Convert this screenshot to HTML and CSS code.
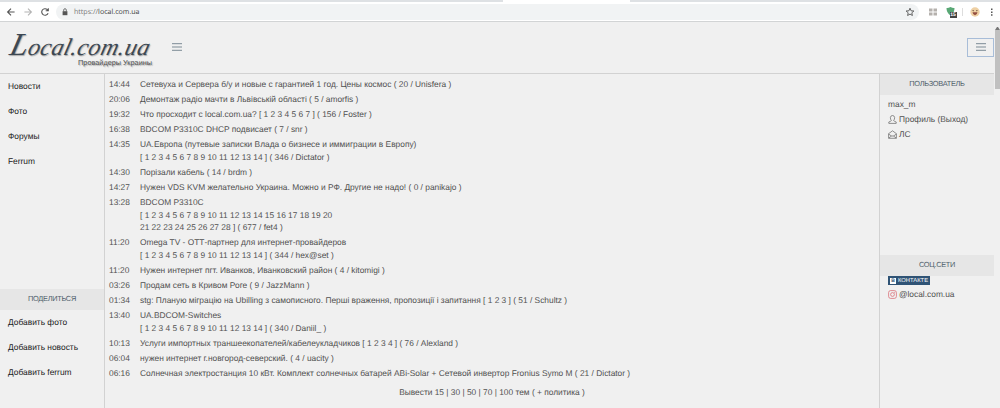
FILE: index.html
```html
<!DOCTYPE html>
<html lang="ru">

<head>
    <meta charset="UTF-8" />
    <title>Local.com.ua</title>
    <link rel="stylesheet" href="styles.css">
</head>

<body>
    <!-- Browser bar -->
    <div class="tabs"><span class="active-tab"></span></div>
    <div class="toolbar">
        <svg class="nav-icon" viewBox="0 0 10 10"><path d="M8.6 5H1.6M5 1.6L1.6 5L5 8.4" /></svg>
        <svg class="nav-icon muted" viewBox="0 0 10 10"><path d="M1.4 5H8.4M5 1.6L8.4 5L5 8.4" /></svg>
        <svg class="nav-icon" viewBox="0 0 10 10"><path d="M8.1 6.2A3.3 3.3 0 1 1 7.3 2.6L8.2 3.6M8.3 1.2V3.8H5.7" /></svg>
        <div class="address">
            <svg class="lock" viewBox="0 0 6 8"><path d="M1 3.2h4.4v4H.6v-4z" fill="#555" /><path d="M1.7 3.4V2a1.3 1.3 0 0 1 2.6 0v1.4" fill="none" stroke="#555" stroke-width=".8" /></svg>
            <span class="url"><span class="scheme">https://</span>local.com.ua</span>
            <svg class="star" viewBox="0 0 10 10"><path d="M5 1.2L6.1 3.8L8.9 4L6.8 5.8L7.4 8.5L5 7.1L2.6 8.5L3.2 5.8L1.1 4L3.9 3.8Z" fill="none" stroke="#555" stroke-width=".9" /></svg>
        </div>
        <div class="extensions">
            <svg class="grid-icon" viewBox="0 0 8 8"><path d="M0 .5h3.5v3H0zM4.5 .5H8v3H4.5zM0 4.5h3.5v3H0zM4.5 4.5H8v3H4.5z" fill="#b5b1ad" /></svg>
            <div class="shield">
                <svg viewBox="0 0 9 9"><path d="M.5 1Q2.5 1.2 4.5 0Q6.5 1.2 8.5 1Q8.6 6 4.5 8.5Q.4 6 .5 1Z" fill="#59a875" /></svg>
                <span class="badge">15</span>
            </div>
            <span class="divider"></span>
            <svg class="avatar" viewBox="0 0 10 10"><circle cx="5" cy="5" r="4.7" fill="#eed0a4" /><path d="M2.5 3.5l1.5.3M7.5 3.5L6 3.8" stroke="#705342" stroke-width=".9" /><path d="M2.5 5.3h5Q7 8.2 5 8.2T2.5 5.3z" fill="#934e40" /></svg>
            <svg class="dots" viewBox="0 0 2 8"><path d="M0 .5h1.5v1.5H0zM0 3.4h1.5v1.5H0zM0 6.3h1.5v1.5H0z" fill="#555" /></svg>
        </div>
    </div>

    <div class="page">
        <div class="content">
            <header class="header">
                <div class="logo">
                    <div class="logo-name"><span class="logo-cap">L</span>ocal.com.ua</div>
                    <div class="logo-sub">Провайдеры Украины</div>
                </div>
                <div class="menu-button"><svg viewBox="0 0 10 8"><path d="M0 .7h10M0 4h10M0 7.3h10" /></svg></div>
                <div class="menu-button focused"><svg viewBox="0 0 10 8"><path d="M0 .7h10M0 4h10M0 7.3h10" /></svg></div>
            </header>

            <div class="columns">
                <nav class="left">
                    <div class="links main-links">
                        <a>Новости</a>
                        <a>Фото</a>
                        <a>Форумы</a>
                        <a>Ferrum</a>
                    </div>
                    <div class="heading">ПОДЕЛИТЬСЯ</div>
                    <div class="links">
                        <a>Добавить фото</a>
                        <a>Добавить новость</a>
                        <a>Добавить ferrum</a>
                    </div>
                </nav>

                <main class="topics">
                    <div class="topic"><time>14:44</time><p>Сетевуха и Сервера б/у и новые с гарантией 1 год. Цены космос ( 20 / Unisfera )</p></div>
                    <div class="topic"><time>20:06</time><p>Демонтаж радіо мачти в Львівській області ( 5 / amorfis )</p></div>
                    <div class="topic"><time>19:32</time><p>Что просходит с local.com.ua? [ 1 2 3 4 5 6 7 ] ( 156 / Foster )</p></div>
                    <div class="topic"><time>16:38</time><p>BDCOM P3310C DHCP подвисает ( 7 / snr )</p></div>
                    <div class="topic"><time>14:35</time><p>UA.Европа (путевые записки Влада о бизнесе и иммиграции в Европу)<br>[ 1 2 3 4 5 6 7 8 9 10 11 12 13 14 ] ( 346 / Dictator )</p></div>
                    <div class="topic"><time>14:30</time><p>Порізали кабель ( 14 / brdm )</p></div>
                    <div class="topic"><time>14:27</time><p>Нужен VDS KVM желательно Украина. Можно и РФ. Другие не надо! ( 0 / panikajo )</p></div>
                    <div class="topic"><time>13:28</time><p>BDCOM P3310C<br>[ 1 2 3 4 5 6 7 8 9 10 11 12 13 14 15 16 17 18 19 20<br>21 22 23 24 25 26 27 28 ] ( 677 / fet4 )</p></div>
                    <div class="topic"><time>11:20</time><p>Omega TV - ОТТ-партнер для интернет-провайдеров<br>[ 1 2 3 4 5 6 7 8 9 10 11 12 13 14 ] ( 344 / hex@set )</p></div>
                    <div class="topic"><time>11:20</time><p>Нужен интернет пгт. Иванков, Иванковский район ( 4 / kitomigi )</p></div>
                    <div class="topic"><time>03:26</time><p>Продам сеть в Кривом Роге ( 9 / JazzMann )</p></div>
                    <div class="topic"><time>01:34</time><p>stg: Планую міграцію на Ubilling з самописного. Перші враження, пропозиції і запитання [ 1 2 3 ] ( 51 / Schultz )</p></div>
                    <div class="topic"><time>13:40</time><p>UA.BDCOM-Switches<br>[ 1 2 3 4 5 6 7 8 9 10 11 12 13 14 ] ( 340 / Daniil_ )</p></div>
                    <div class="topic"><time>10:13</time><p>Услуги импортных траншеекопателей/кабелеукладчиков [ 1 2 3 4 ] ( 76 / Alexland )</p></div>
                    <div class="topic"><time>06:04</time><p>нужен интернет г.новгород-северский. ( 4 / uacity )</p></div>
                    <div class="topic"><time>06:16</time><p>Солнечная электростанция 10 кВт. Комплект солнечных батарей ABi-Solar + Сетевой инвертор Fronius Symo M ( 21 / Dictator )</p></div>
                    <div class="show-more">Вывести 15 | 30 | 50 | 70 | 100 тем ( + политика )</div>
                </main>

                <aside class="right">
                    <div class="heading">ПОЛЬЗОВАТЕЛЬ</div>
                    <div class="user">
                        <div>max_m</div>
                        <div class="user-row">
                            <svg viewBox="0 0 9 9"><path d="M3.4 5.4Q2.2 4.5 2.4 2.4Q2.7.5 4.5.5T6.6 2.4Q6.8 4.5 5.6 5.4Q5.5 6 8.2 7V8.4H.8V7Q3.5 6 3.4 5.4Z" /></svg>
                            Профиль (Выход)
                        </div>
                        <div class="user-row">
                            <svg viewBox="0 0 9 9"><path d="M.6 3.7L4.5.8L8.4 3.7V8.3H.6zM.6 4L3.4 6H5.6L8.4 4M.8 8.1L3.4 6M8.2 8.1L5.6 6" /></svg>
                            ЛС
                        </div>
                    </div>
                    <div class="heading">СОЦ.СЕТИ</div>
                    <div class="social">
                        <div class="vk"><span class="vk-logo">В</span>КОНТАКТЕ</div>
                        <div class="user-row instagram">
                            <svg viewBox="0 0 9 9"><rect x=".6" y=".6" width="7.8" height="7.8" rx="2" /><circle cx="4.5" cy="4.5" r="1.9" /><circle cx="6.7" cy="2.3" r=".2" /></svg>
                            @local.com.ua
                        </div>
                    </div>
                </aside>
            </div>
        </div>
        <div class="scrollbar"><span class="arrow"></span><span class="thumb"></span></div>
    </div>
</body>

</html>
```
FILE: styles.css
```css
* {
    box-sizing: border-box;
}

body {
    margin: 0;
    width: 1000px;
    height: 408px;
    overflow: hidden;
    display: flex;
    flex-direction: column;
    background-color: #f0f0f0;
    color: #505050;
    font-family: "Liberation Sans", Arial, sans-serif;
    font-size: 8.37px;
    text-rendering: geometricPrecision;
}

svg {
    display: block;
    flex: none;
}

/* Browser bar */
.tabs {
    height: 2px;
    flex: none;
    background-color: #dee1e4;
}

.active-tab {
    display: block;
    width: 127px;
    height: 2px;
    margin-left: 503px;
    background-color: #fff;
}

.toolbar {
    height: 20px;
    flex: none;
    display: flex;
    align-items: center;
    padding: 0 5px 0 6px;
    background-color: #fff;
    border-bottom: 1px solid #d2d4d5;
}

.nav-icon {
    width: 10px;
    height: 10px;
    margin-right: 6.8px;
    fill: none;
    stroke: #555;
    stroke-width: 1.1;
}

.muted {
    stroke: #b4b4b4;
}

.address {
    flex: 1;
    height: 16px;
    display: flex;
    align-items: center;
    padding: 0 4px 0 6px;
    border-radius: 8px;
    background-color: #f1f3f4;
}

.lock {
    width: 6px;
    height: 8px;
}

.url {
    flex: 1;
    margin-left: 5.5px;
    color: #444;
    font-family: "Open Sans", sans-serif;
    font-size: 7.1px;
}

.scheme {
    color: #777;
}

.star {
    width: 10px;
    height: 10px;
}

.extensions {
    width: 76px;
    display: flex;
    align-items: center;
    padding-left: 9.5px;
}

.grid-icon {
    width: 8px;
    height: 8px;
}

.shield {
    position: relative;
    width: 10px;
    margin-left: 9px;
}

.shield svg {
    width: 9px;
    height: 9px;
}

.badge {
    position: absolute;
    left: 4px;
    top: 5px;
    width: 7px;
    height: 6px;
    background-color: #444;
    color: #fff;
    font-size: 5px;
    font-weight: bold;
    line-height: 6px;
    text-align: center;
}

.divider {
    width: 1px;
    height: 8px;
    margin-left: 6px;
    background-color: #ddd;
}

.avatar {
    width: 10px;
    height: 10px;
    margin-left: 7px;
}

.dots {
    width: 2px;
    height: 8px;
    margin-left: 11px;
}

/* Page */
.page {
    flex: 1;
    display: flex;
    min-height: 0;
}

.content {
    width: 994px;
    display: flex;
    flex-direction: column;
}

.header {
    height: 52px;
    flex: none;
    display: flex;
    align-items: center;
    border-bottom: 1px solid #d2d2d2;
}

.logo {
    width: 152px;
    height: 51px;
    padding: 9px 0 0 11px;
    white-space: nowrap;
    text-shadow: 1px 1px 1px #aaa;
}

.logo-name {
    height: 28px;
    line-height: 34px;
    color: #3d4852;
    font-family: "Liberation Serif", serif;
    font-size: 24px;
    font-style: italic;
    letter-spacing: 0.4px;
    transform: skewX(-14deg);
}

.logo-cap {
    font-size: 32px;
    line-height: 20px;
}

.logo-sub {
    line-height: 8px;
    text-align: right;
    font-size: 7.3px;
}

.menu-button {
    width: 27px;
    height: 19px;
    display: flex;
    align-items: center;
    justify-content: center;
    margin-left: 11px;
    margin-bottom: 1px;
}

.menu-button svg {
    width: 10px;
    height: 8px;
    stroke: #7c8b95;
    stroke-width: 1;
}

.focused {
    margin-left: auto;
    border: 1px solid #a8bdd8;
}

.columns {
    flex: 1;
    display: flex;
}

.left {
    width: 105px;
    border-right: 1px solid #d2d2d2;
    color: #222;
}

.links {
    display: flex;
    flex-direction: column;
    padding-left: 8px;
    font-size: 8.4px;
}

.links a {
    height: 25px;
    line-height: 25px;
}

.main-links {
    height: 215px;
}

.heading {
    height: 21px;
    line-height: 19px;
    background-color: #e6e6e6;
    color: #4f5f6b;
    text-align: center;
    font-size: 7.4px;
    letter-spacing: -0.3px;
}

.topics {
    width: 774px;
    padding: 3.8px 0 0 4px;
    line-height: 12.5px;
    white-space: nowrap;
}

.topic {
    display: flex;
    padding-bottom: 2.65px;
}

.topic time {
    width: 31px;
}

.topic p {
    margin: 0;
}

.show-more {
    margin-top: 3px;
    padding-right: 4px;
    text-align: center;
}

.right {
    flex: 1;
    border-left: 1px solid #d2d2d2;
}

.user {
    height: 160px;
    padding: 1.5px 0 0 8px;
    line-height: 15px;
    font-size: 8.4px;
}

.user-row {
    display: flex;
    align-items: center;
    gap: 2px;
}

.user-row svg {
    width: 9px;
    height: 9px;
    fill: none;
    stroke: #666;
    stroke-width: 0.7;
}

.social {
    padding-left: 8px;
    line-height: 19px;
    font-size: 8.4px;
}

.vk {
    width: 42px;
    height: 9px;
    display: flex;
    align-items: center;
    padding-left: 2px;
    background-color: #2f5375;
    color: #fff;
    font-size: 5.8px;
    line-height: 10px;
}

.vk-logo {
    width: 6px;
    height: 6px;
    margin-right: 2px;
    background-color: #fff;
    color: #2f5375;
    font-size: 5px;
    font-weight: bold;
    line-height: 6px;
    text-align: center;
}

.instagram svg {
    stroke: #d9626a;
}

/* Scrollbar */
.scrollbar {
    width: 6px;
    padding-left: 1px;
}

.arrow {
    display: block;
    width: 5px;
    height: 8px;
    border: 2px solid transparent;
    border-bottom: 3px solid #777;
}

.thumb {
    display: block;
    height: 59px;
    background-color: #c0c0c0;
}
```
